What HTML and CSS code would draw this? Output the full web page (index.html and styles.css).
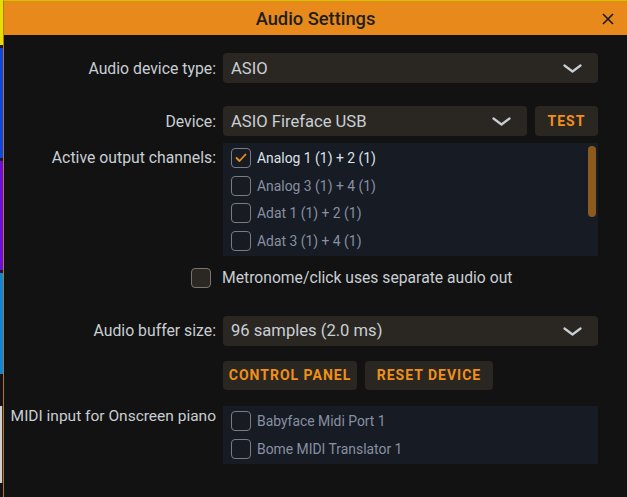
FILE: index.html
```html
<!DOCTYPE html>
<html>
<head>
<meta charset="utf-8">
<link rel="stylesheet" href="styles.css">
</head>
<body>
<div class="page">
  <div class="strip">
    <div class="seg yellow"></div>
    <div class="seg gap"></div>
    <div class="seg blue"></div>
    <div class="seg gap"></div>
    <div class="seg purple"></div>
    <div class="seg gap"></div>
    <div class="seg lblue"></div>
    <div class="seg dark"></div>
    <div class="seg light"></div>
  </div>
  <div class="dialog">
    <div class="titlebar">
      <span class="title">Audio Settings</span>
      <svg class="close" width="12" height="12" viewBox="0 0 12 12"><path d="M1 1L11 11M11 1L1 11" stroke="#1a1a1a" stroke-width="1.6" fill="none"/></svg>
    </div>
    <div class="content">
      <div class="row r1">
        <div class="label">Audio device type:</div>
        <div class="ctrl">
          <div class="select full"><span>ASIO</span>
            <svg class="chev" width="19" height="9" viewBox="0 0 19 9"><path d="M1.5 1.5L9.5 7.5L17.5 1.5" stroke="#c8ced2" stroke-width="2.2" fill="none" stroke-linecap="round" stroke-linejoin="round"/></svg>
          </div>
        </div>
      </div>
      <div class="row r2">
        <div class="label">Device:</div>
        <div class="ctrl">
          <div class="select grow"><span>ASIO Fireface USB</span>
            <svg class="chev" width="19" height="9" viewBox="0 0 19 9"><path d="M1.5 1.5L9.5 7.5L17.5 1.5" stroke="#c8ced2" stroke-width="2.2" fill="none" stroke-linecap="round" stroke-linejoin="round"/></svg>
          </div>
          <div class="btn test">TEST</div>
        </div>
      </div>
      <div class="row r3 top">
        <div class="label lab-list">Active output channels:</div>
        <div class="ctrl">
          <div class="list outlist">
            <div class="item on"><span class="cb"><svg width="12" height="10" viewBox="0 0 12 10"><path d="M1.5 5L4.5 8L10.5 1.5" stroke="#f0901a" stroke-width="1.8" fill="none" stroke-linecap="round" stroke-linejoin="round"/></svg></span><span>Analog 1 (1) + 2 (1)</span></div>
            <div class="item"><span class="cb"></span><span>Analog 3 (1) + 4 (1)</span></div>
            <div class="item"><span class="cb"></span><span>Adat 1 (1) + 2 (1)</span></div>
            <div class="item"><span class="cb"></span><span>Adat 3 (1) + 4 (1)</span></div>
            <div class="scroll"></div>
          </div>
        </div>
      </div>
      <div class="row r4">
        <div class="label"><span class="cb solid"></span></div>
        <div class="metro">Metronome/click uses separate audio out</div>
      </div>
      <div class="row r5">
        <div class="label">Audio buffer size:</div>
        <div class="ctrl">
          <div class="select full"><span>96 samples (2.0 ms)</span>
            <svg class="chev" width="19" height="9" viewBox="0 0 19 9"><path d="M1.5 1.5L9.5 7.5L17.5 1.5" stroke="#c8ced2" stroke-width="2.2" fill="none" stroke-linecap="round" stroke-linejoin="round"/></svg>
          </div>
        </div>
      </div>
      <div class="row r6">
        <div class="label"></div>
        <div class="ctrl">
          <div class="btn cp">CONTROL PANEL</div>
          <div class="btn rd">RESET DEVICE</div>
        </div>
      </div>
      <div class="row r7 top">
        <div class="label lab-midi">MIDI input for Onscreen piano</div>
        <div class="ctrl">
          <div class="list midilist">
            <div class="item"><span class="cb"></span><span>Babyface Midi Port 1</span></div>
            <div class="item"><span class="cb"></span><span>Bome MIDI Translator 1</span></div>
          </div>
        </div>
      </div>
    </div>
  </div>
</div>
</body>
</html>
```
FILE: styles.css
```css
html, body {
  margin: 0;
  padding: 0;
  background: #121212;
  font-family: Roboto, "Liberation Sans", sans-serif;
}
.page {
  display: flex;
  width: 627px;
  height: 497px;
  overflow: hidden;
}
.strip {
  width: 3px;
  display: flex;
  flex-direction: column;
  flex-shrink: 0;
}
.seg { width: 3px; }
.yellow { height: 45px; background: #e6e000; }
.gap { height: 3px; background: #1a1a2a; }
.blue { height: 110px; background: #0a48e8; }
.purple { height: 109px; background: #6c0ce4; }
.lblue { height: 101px; background: #0888e0; }
.dark { height: 32px; background: #121212; }
.light { height: 77px; background: #d0d0d0; border-right: 1px solid #333; width: 2px; }
.dialog {
  flex: 1;
  display: flex;
  flex-direction: column;
  border-left: 1px solid #b8741e;
  border-top: 1px solid #cfc400;
}
.titlebar {
  height: 34px;
  background: #e8891b;
  display: flex;
  align-items: center;
  justify-content: center;
  position: relative;
}
.title {
  font-size: 18.3px;
  font-weight: 500;
  color: #1e1e1e;
  margin-top: 1px;
}
.close {
  position: absolute;
  right: 13px;
  top: 12px;
}
.content {
  display: flex;
  flex-direction: column;
}
.row {
  display: flex;
  align-items: center;
}
.row.top { align-items: flex-start; }
.label {
  width: 212px;
  flex-shrink: 0;
  text-align: right;
  font-size: 15.8px;
  color: #c8ced2;
  display: flex;
  justify-content: flex-end;
  align-items: center;
}
.ctrl {
  margin-left: 7px;
  width: 375px;
  display: flex;
  gap: 8px;
}
.r1 { margin-top: 18px; }
.r2 { margin-top: 23px; }
.r3 { margin-top: 7px; }
.r4 { margin-top: 12px; }
.r5 { margin-top: 28px; }
.r6 { margin-top: 15px; }
.r7 { margin-top: 16px; }
.select {
  height: 30px;
  background: #2a2723;
  border-radius: 4px;
  display: flex;
  align-items: center;
  justify-content: space-between;
  padding: 0 16px 0 8px;
  box-sizing: border-box;
  font-size: 16.6px;
  color: #c9cfd3;
}
.select.full { width: 375px; }
.select.grow { width: 304px; }
.chev { margin-top: 1px; }
.btn {
  height: 30px;
  background: #2a2622;
  border-radius: 4px;
  display: flex;
  align-items: center;
  justify-content: center;
  font-size: 14px;
  font-weight: 700;
  color: #f0901a;
  letter-spacing: 1px;
}
.test { width: 63px; }
.cp { width: 134px; height: 29px; }
.rd { width: 128px; height: 29px; }
.lab-list { padding-top: 5px; }
.lab-midi { padding-top: 1px; font-size: 15.5px; }
.list {
  width: 375px;
  background: #161b24;
  box-sizing: border-box;
  padding: 1.25px 8px;
  position: relative;
}
.item {
  height: 27.6px;
  display: flex;
  align-items: center;
  font-size: 13.9px;
  color: #8890a2;
}
.item.on { color: #dfe3ea; }
.cb {
  width: 18px;
  height: 18px;
  border: 1.5px solid #7c7c7c;
  border-radius: 4px;
  margin-right: 6px;
  display: flex;
  align-items: center;
  justify-content: center;
  flex-shrink: 0;
}
.label .cb.solid {
  background: #2b2824;
  margin-right: 5px;
  border-color: #787470;
}
.metro {
  font-size: 15.7px;
  color: #c8ced2;
  margin-left: 6px;
}
.scroll {
  position: absolute;
  right: 2px;
  top: 3px;
  width: 8px;
  height: 71px;
  border-radius: 4px;
  background: #8c5a1c;
}
```
